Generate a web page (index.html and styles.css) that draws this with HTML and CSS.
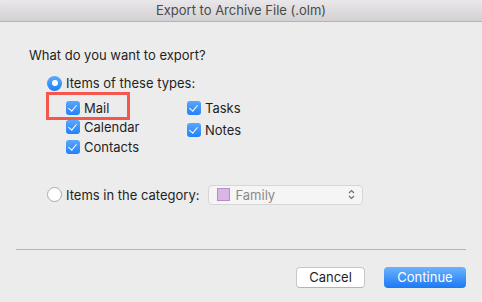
FILE: index.html
```html
<!DOCTYPE html>
<html lang="en">
<head>
    <meta charset="UTF-8">
    <title>Export to Archive File (.olm)</title>
    <link rel="stylesheet" href="styles.css">
</head>
<body>
    <div class="window">
        <div class="titlebar">Export to Archive File (.olm)</div>

        <div class="content">
            <p class="question">What do you want to export?</p>

            <div class="option">
                <span class="radio checked"></span>
                <span>Items of these types:</span>
            </div>

            <div class="types">
                <ul class="type-list">
                    <li><span class="checkbox"></span>Mail</li>
                    <li><span class="checkbox"></span>Calendar</li>
                    <li><span class="checkbox"></span>Contacts</li>
                </ul>
                <ul class="type-list wide">
                    <li><span class="checkbox"></span>Tasks</li>
                    <li><span class="checkbox"></span>Notes</li>
                </ul>
            </div>

            <div class="option category">
                <span class="radio"></span>
                <span>Items in the category:</span>
                <div class="popup">
                    <span class="swatch"></span>
                    <span class="popup-label">Family</span>
                    <svg class="chevrons" width="7" height="11" viewBox="0 0 7 11">
                        <path d="M1 4 L3.5 1.5 L6 4" fill="none" stroke="#6b6b6b" stroke-width="1.1"/>
                        <path d="M1 7 L3.5 9.5 L6 7" fill="none" stroke="#6b6b6b" stroke-width="1.1"/>
                    </svg>
                </div>
            </div>

            <div class="separator"></div>

            <div class="buttons">
                <button class="btn">Cancel</button>
                <button class="btn primary">Continue</button>
            </div>
        </div>

        <!-- annotation box around Mail -->
        <div class="highlight"></div>
    </div>
</body>
</html>
```

FILE: styles.css
```css
:root {
    --color-bg: #ececec;
    --color-text: #1f1f1f;
    --color-blue: #2f8cfb;
    --color-highlight: #f5574c;
}

body {
    margin: 0;
    background: var(--color-bg);
    font-family: 'Inter', 'Liberation Sans', sans-serif;
    font-size: 13px;
    color: var(--color-text);
}

.window {
    position: relative;
    width: 482px;
    height: 302px;
    overflow: hidden;
}

.titlebar {
    height: 21px;
    line-height: 21px;
    text-align: center;
    color: #4a4a4a;
    background: linear-gradient(#e9e7e9, #d2d0d2);
    border-bottom: 1px solid #b3b3b3;
    border-radius: 4px 4px 0 0;
}

.content {
    padding: 25px 16px 0 16px;
}

.question {
    margin: 0 0 12px 13px;
    line-height: 16px;
}

.option {
    display: flex;
    align-items: center;
    gap: 4px;
    margin-left: 31px;
    line-height: 16px;
}

.radio {
    width: 15px;
    height: 15px;
    box-sizing: border-box;
    border-radius: 50%;
    border: 1px solid #a9a9a9;
    background: #fff;
    display: flex;
    align-items: center;
    justify-content: center;
}

.radio.checked {
    border: none;
    background: linear-gradient(#5eaafd, #1f7ff8);
}

.radio.checked::after {
    content: '';
    width: 6px;
    height: 6px;
    border-radius: 50%;
    background: #fff;
}

.types {
    display: flex;
    margin: 7px 0 0 50px;
}

.type-list {
    list-style: none;
    margin: 0;
    padding: 0;
    width: 121px;
    display: flex;
    flex-direction: column;
}

.type-list li {
    display: flex;
    align-items: center;
    gap: 4px;
    height: 19.5px;
}

.type-list.wide {
    gap: 3px;
}

.checkbox {
    width: 14px;
    height: 14px;
    border-radius: 3px;
    background: linear-gradient(#5aa7fd, #2382f8);
    position: relative;
}

.checkbox::after {
    content: '';
    position: absolute;
    left: 4px;
    top: 2px;
    width: 4px;
    height: 7px;
    border: solid #fff;
    border-width: 0 1.6px 1.6px 0;
    transform: rotate(40deg);
}

.category {
    margin-top: 28px;
}

.popup {
    display: flex;
    align-items: center;
    width: 155px;
    height: 20px;
    box-sizing: border-box;
    margin-left: 5px;
    padding: 0 7px 0 8px;
    background: #f5f5f5;
    border: 1px solid #d6d6d6;
    border-radius: 4px;
    color: #8a8a8a;
}

.swatch {
    width: 11px;
    height: 11px;
    background: #d9b6e6;
    border: 1px solid #b48fc4;
    margin-right: 5px;
}

.popup-label {
    flex: 1;
}

.separator {
    height: 1px;
    background: #b5b5b5;
    margin: 44px 0 0 0;
}

.buttons {
    display: flex;
    justify-content: flex-end;
    gap: 19px;
    margin-top: 17px;
}

.btn {
    height: 21px;
    box-sizing: border-box;
    font-family: inherit;
    font-size: 13px;
    color: var(--color-text);
    background: #fff;
    border: 1px solid #c8c8c8;
    border-bottom-color: #b5b5b5;
    border-radius: 4px;
    padding: 0;
    width: 69px;
}

.btn.primary {
    width: 82px;
    color: #fff;
    border: none;
    background: linear-gradient(#6cb3fd, #1b79f6);
}

.highlight {
    position: absolute;
    left: 46px;
    top: 92px;
    width: 84px;
    height: 28px;
    box-sizing: border-box;
    border: 3px solid var(--color-highlight);
}
```
